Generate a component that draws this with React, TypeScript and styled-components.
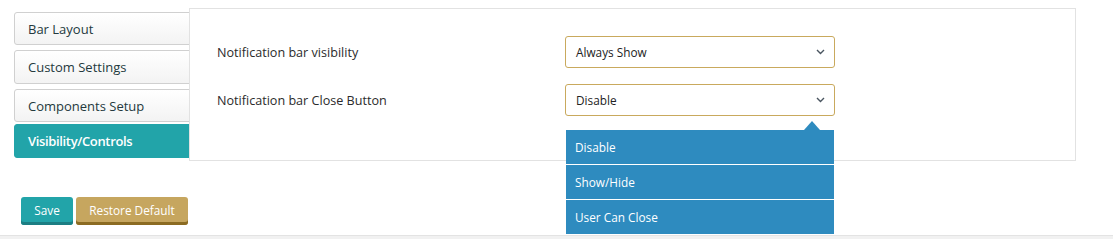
import React from "react";
import styled, { createGlobalStyle } from "styled-components";

const Global = createGlobalStyle`
  html, body { margin: 0; padding: 0; background: #fff; }
  body { font-family: "Open Sans", "Liberation Sans", sans-serif; font-size: 13px; color: #333; }
  * { box-sizing: border-box; }
`;

const Page = styled.div`
  width: 1113px;
  height: 239px;
  overflow: hidden;
  display: flex;
  flex-direction: column;
`;

const Top = styled.div`
  display: flex;
  align-items: flex-start;
  padding: 8px 0 0 14px;
`;

const Sidebar = styled.div`
  width: 175px;
  padding-top: 4px;
  display: flex;
  flex-direction: column;
`;

const Tab = styled.div<{ $active?: boolean; $h: number; $mb: number }>`
  width: 177px;
  height: ${(p) => p.$h}px;
  margin-bottom: ${(p) => p.$mb}px;
  display: flex;
  align-items: center;
  padding-left: 13px;
  border-radius: 3px 0 0 3px;
  font-size: 13px;
  white-space: nowrap;
  ${(p) =>
    p.$active
      ? `background: #22a4a9; color: #fff; font-weight: 600; border: 1px solid #22a4a9; letter-spacing: -0.35px;`
      : `background: linear-gradient(#ffffff, #f3f3f3); color: #24393d; border: 1px solid #d0d0d0;`}
`;

const Panel = styled.div`
  position: relative;
  z-index: 2;
  width: 887px;
  height: 153px;
  background: #fff;
  border: 1px solid #e2e2e2;
  padding: 27px 0 0 27px;
  display: flex;
  flex-direction: column;
  gap: 16px;
`;

const Row = styled.div`
  display: flex;
  align-items: center;
`;

const Label = styled.div`
  width: 348px;
  font-size: 12.6px;
  color: #2b2b2b;
`;

const SelectWrap = styled.div`
  position: relative;
`;

const Select = styled.div`
  width: 270px;
  height: 32px;
  border: 1px solid #c9a95d;
  border-radius: 3px;
  background: #fff;
  display: flex;
  align-items: center;
  justify-content: space-between;
  padding: 0 9px 0 10px;
  font-size: 11.8px;
  color: #222;
`;

const Menu = styled.div`
  position: absolute;
  left: 1px;
  top: 46px;
  width: 268px;
  background: #2e8bbf;
  z-index: 5;
  &::before {
    content: "";
    position: absolute;
    top: -9px;
    right: 14px;
    border-left: 8px solid transparent;
    border-right: 8px solid transparent;
    border-bottom: 9px solid #2e8bbf;
  }
`;

const Item = styled.div<{ $last?: boolean }>`
  height: ${(p) => (p.$last ? 34 : 35)}px;
  display: flex;
  align-items: center;
  padding-left: 9px;
  color: #fff;
  font-size: 11.8px;
  border-bottom: ${(p) => (p.$last ? "none" : "1px solid #ffffff")};
`;

const Buttons = styled.div`
  display: flex;
  gap: 3px;
  margin: 36px 0 0 21px;
`;

const Btn = styled.button<{ $bg: string; $shadow: string; $w: number }>`
  width: ${(p) => p.$w}px;
  height: 28px;
  border: none;
  border-radius: 3px;
  background: ${(p) => p.$bg};
  box-shadow: inset 0 -3px 0 ${(p) => p.$shadow};
  color: #fff;
  font-family: "Open Sans", "Liberation Sans", sans-serif;
  font-size: 11.8px;
  padding: 0 0 3px;
  cursor: pointer;
`;

const Footer = styled.div`
  margin-top: 10px;
  flex: 1;
  border-top: 1px solid #e3e3e3;
  background: #f1f1f1;
`;

const Chevron = () => (
  <svg width="9" height="6" viewBox="0 0 9 6">
    <path d="M1 1 L4.5 4.5 L8 1" fill="none" stroke="#4a5560" strokeWidth="1.4" />
  </svg>
);

export default function App() {
  return (
    <Page>
      <Global />
      <Top>
        <Sidebar>
          <Tab $h={33} $mb={5}>Bar Layout</Tab>
          <Tab $h={34} $mb={5}>Custom Settings</Tab>
          <Tab $h={33} $mb={2}>Components Setup</Tab>
          <Tab $h={34} $mb={0} $active>Visibility/Controls</Tab>
        </Sidebar>
        <Panel>
          <Row>
            <Label>Notification bar visibility</Label>
            <SelectWrap>
              <Select>
                <span>Always Show</span>
                <Chevron />
              </Select>
            </SelectWrap>
          </Row>
          <Row>
            <Label>Notification bar Close Button</Label>
            <SelectWrap>
              <Select>
                <span>Disable</span>
                <Chevron />
              </Select>
              <Menu>
                <Item>Disable</Item>
                <Item>Show/Hide</Item>
                <Item $last>User Can Close</Item>
              </Menu>
            </SelectWrap>
          </Row>
        </Panel>
      </Top>
      <Buttons>
        <Btn $bg="#22a4a9" $shadow="#1c7e83" $w={52}>Save</Btn>
        <Btn $bg="#c6a65f" $shadow="#8b6b22" $w={112}>Restore Default</Btn>
      </Buttons>
      <Footer />
    </Page>
  );
}
